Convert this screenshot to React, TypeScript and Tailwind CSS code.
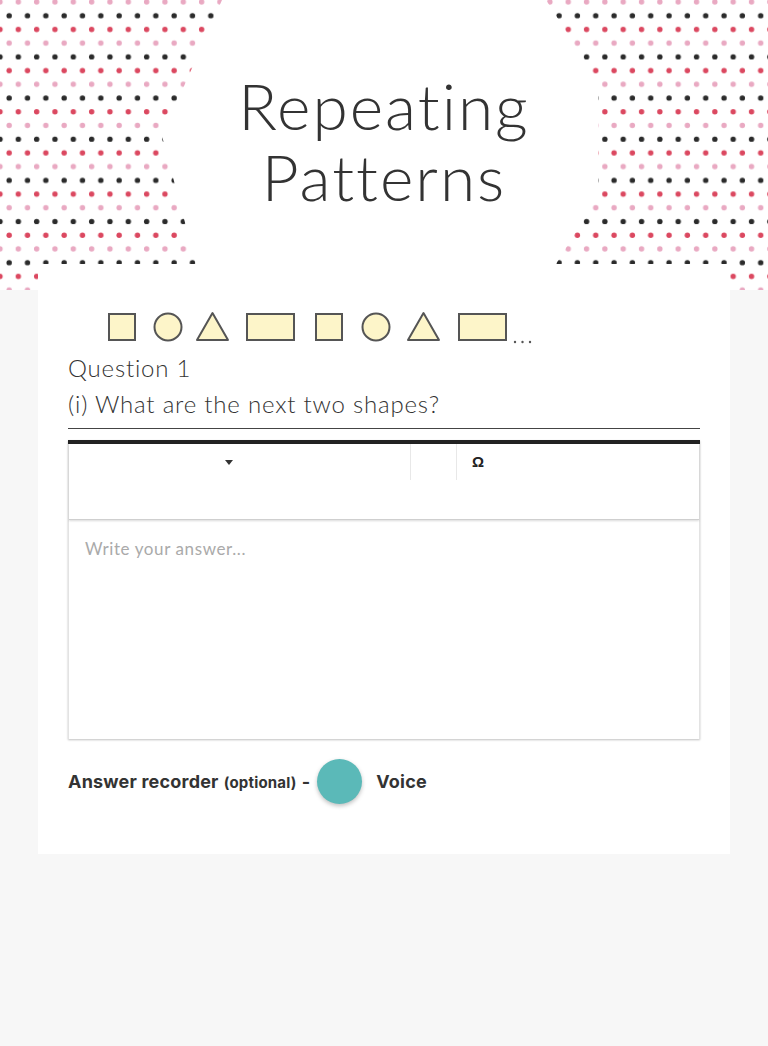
const dotRows = [
  { y: 7, fill: '#e9a9c2', off: 0 },
  { y: 20.72, fill: '#2b2b2b', off: 1 },
  { y: 34.44, fill: '#db4860', off: 0 },
  { y: 48.16, fill: '#e9a9c2', off: 1 },
  { y: 61.88, fill: '#2b2b2b', off: 0 },
  { y: 75.6, fill: '#db4860', off: 1 },
];

function DotsHeader() {
  return (
    <div className="relative h-[290px] w-full overflow-hidden bg-white">
      <svg className="absolute inset-0 h-full w-full" viewBox="0 0 768 290" preserveAspectRatio="none">
        <defs>
          <pattern id="dots" x="-4.58" y="-5" width="18.33" height="82.32" patternUnits="userSpaceOnUse">
            {dotRows.map((r, i) => (
              <circle key={i} cx={r.off ? 13.75 : 4.58} cy={r.y} r="2.7" fill={r.fill} />
            ))}
          </pattern>
        </defs>
        <rect width="768" height="290" fill="url(#dots)" />
        <polygon points="222,0 546,0 598,82 598,196 556,264 560,270 190,270 196,264 162,136" fill="#fff" />
      </svg>
      <div className="relative flex h-[263px] items-center justify-center pt-[18px]">
        <h1 className="text-center font-['Lato',sans-serif] text-[64px] font-light leading-[71px] tracking-[2px] text-[#333]">
          Repeating
          <br />
          Patterns
        </h1>
      </div>
    </div>
  );
}

function Shapes() {
  const fill = '#fdf5c9';
  const stroke = '#555';
  return (
    <svg width="440" height="42" viewBox="100 300 440 42" className="block">
      <g fill={fill} stroke={stroke} strokeWidth="2">
        <rect x="109" y="308" width="26" height="26" />
        <circle cx="168" cy="321" r="13.5" />
        <polygon points="197,334 212.5,307 228,334" strokeLinejoin="round" />
        <rect x="247" y="308" width="47" height="26" />
        <rect x="316" y="308" width="26" height="26" />
        <circle cx="376" cy="321" r="13.5" />
        <polygon points="408,334 423.5,307 439,334" strokeLinejoin="round" />
        <rect x="459" y="308" width="47" height="26" />
      </g>
      <g fill="#555">
        <circle cx="515" cy="336" r="1.2" />
        <circle cx="522.5" cy="336" r="1.2" />
        <circle cx="530" cy="336" r="1.2" />
      </g>
    </svg>
  );
}

export default function App() {
  return (
    <div className="min-h-screen bg-[#f7f7f7] pb-[190px]">
      <DotsHeader />
      <div className="relative mx-[38px] -mt-[26px] bg-white px-[30px] pt-[42px] pb-[50px]">
        <div className="ml-[32px]">
          <Shapes />
        </div>
        <div className="mt-[2px] font-['Lato',sans-serif] text-[24px] font-light leading-[36px] tracking-[0.8px] text-[#333]">
          <p>Question 1</p>
          <p>(i) What are the next two shapes?</p>
        </div>
        <div className="mt-[6px] h-px bg-[#444]" />

        <div className="mt-[11px] border-t-4 border-[#222] shadow-[0_1px_2px_rgba(0,0,0,0.25)]">
          <div className="border-x border-[#e3e3e3]">
            <div className="h-[76px] border-b border-[#cfcfcf] shadow-[0_1px_2px_rgba(0,0,0,0.15)]">
              <div className="flex h-[36px] items-stretch">
                <div className="flex w-[341px] items-center pl-[156px]">
                  <svg width="8" height="5" viewBox="0 0 8 5">
                    <polygon points="0,0 8,0 4,5" fill="#333" />
                  </svg>
                </div>
                <div className="w-[46px] border-l border-[#e8e8e8]" />
                <div className="flex items-center border-l border-[#e8e8e8] pl-[15px] font-['Liberation_Sans',sans-serif] text-[15px] font-bold text-[#222]">
                  Ω
                </div>
              </div>
            </div>
            <div className="h-[219px] px-[16px] pt-[16px] font-['Lato',sans-serif] text-[17px] tracking-[0.6px] text-[#aaa]">
              Write your answer...
            </div>
          </div>
        </div>

        <div className="mt-[20px] flex items-center font-['Inter',sans-serif] font-bold tracking-[0.2px] text-[#333]">
          <span className="flex items-baseline">
            <span className="text-[18px]">Answer recorder</span>
            <span className="ml-[5px] text-[15px]">(optional)</span>
            <span className="ml-[5px] text-[18px]">-</span>
          </span>
          <button type="button" className="ml-[7px] h-[45px] w-[45px] rounded-full bg-[#5bb9b8] shadow-[0_2px_4px_rgba(0,0,0,0.25)]" />
          <span className="ml-[14px] text-[18px]">Voice</span>
        </div>
      </div>
    </div>
  );
}
